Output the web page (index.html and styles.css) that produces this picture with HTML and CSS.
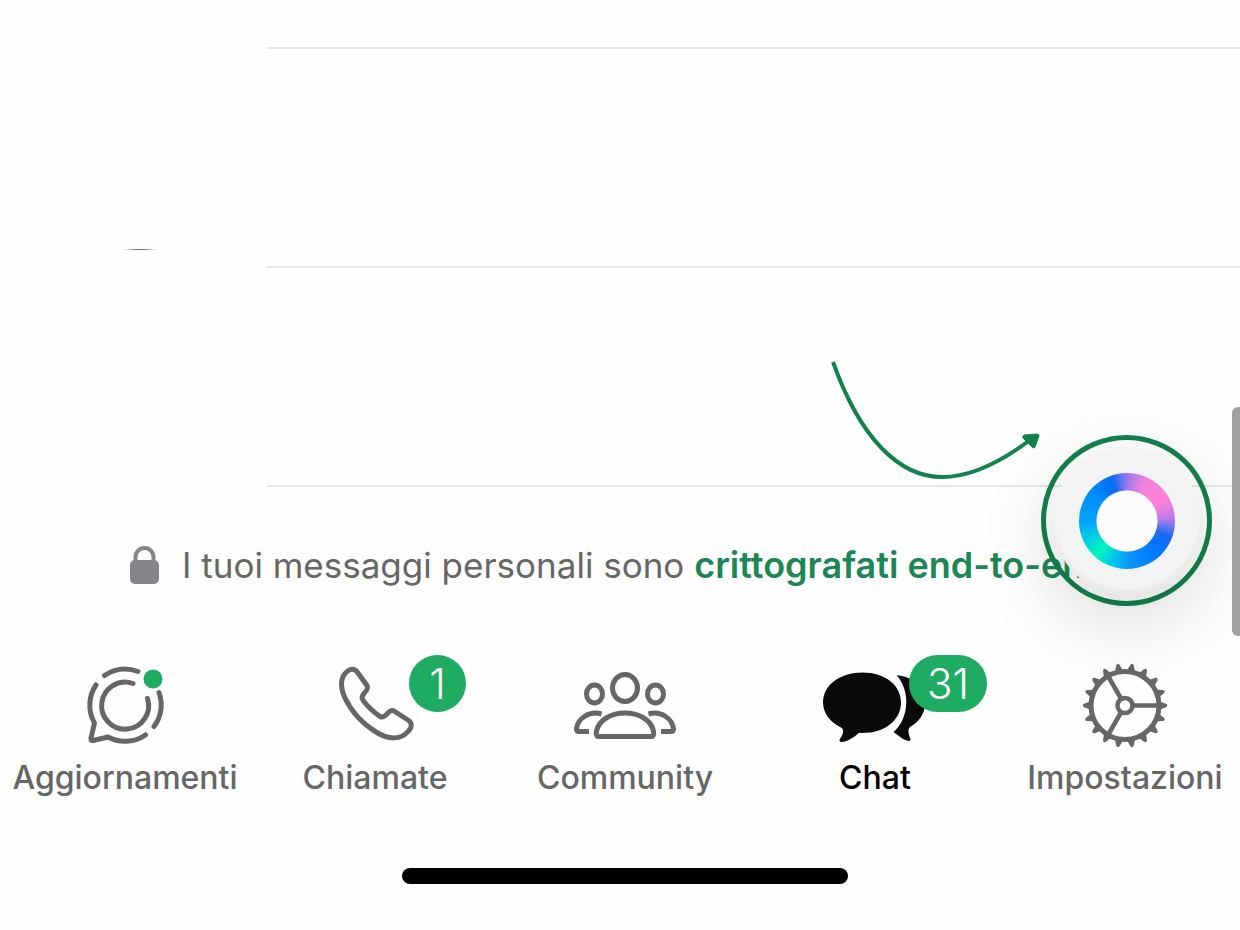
FILE: index.html
```
<!DOCTYPE html>
<html lang="it">
<head>
  <meta charset="UTF-8" />
  <meta name="viewport" content="width=device-width, initial-scale=1.0" />
  <title>Chat</title>
  <link rel="stylesheet" href="styles.css">
</head>
<body>
  <main class="chats">
    <div class="chat-row first"></div>
    <div class="chat-row">
      <svg class="avatar-edge" width="36" height="2" viewBox="0 0 36 2"><path d="M2 1.8 Q18 0 34 1.8z" fill="#333"/></svg>
    </div>
    <div class="chat-row"></div>

    <p class="notice">
      <svg class="lock" width="30" height="38" viewBox="0 0 30 38">
        <path d="M5.500 17v-6a9 9 0 0 1 18 0v6" fill="none" stroke="#858489" stroke-width="4"/>
        <rect y="14" width="29" height="24" rx="5" fill="#858489"/>
      </svg>
      <span>I tuoi messaggi personali sono <a href="#">crittografati end-to-end</a></span>
    </p>

    <svg class="arrow" width="212" height="126" viewBox="0 0 212 126">
      <path d="M5 6C32 82 71 121 114 121C140 121 170 108 202 84" fill="none" stroke="#12824c" stroke-width="4"/>
      <path d="M196 79L209 78Q211 78 211 80L207 91Q206 93 204 91L195 82Q194 80 196 79z" fill="#12824c" stroke="#12824c"/>
    </svg>

    <button class="ai" type="button" aria-label="Meta AI">
      <span class="disc"><span class="halo"></span></span>
    </button>
    <div class="scrollbar"></div>
  </main>

  <footer>
    <nav>
      <a href="#">
        <svg class="icon" width="90" height="92" viewBox="0 0 90 92" fill="none" stroke="#666" stroke-width="5" stroke-linecap="round" stroke-linejoin="round">
          <path d="M24.500 15.500A38 38 0 0 1 58 11.500"/>
          <path d="M79 32.500A36 36 0 0 1 74 66.500"/>
          <path d="M65.500 75A36 36 0 0 1 28 77L13 80.500Q10.500 81 11 78L14.500 63A36 36 0 0 1 16 25"/>
          <path d="M53 23.500A23.500 23.500 0 1 0 67.500 38.500"/>
          <circle cx="73" cy="19" r="9.500" fill="#1fab61" stroke="none"/>
        </svg>
        <span>Aggiornamenti</span>
      </a>
      <a href="#">
        <svg class="icon" width="90" height="92" viewBox="0 0 90 92" fill="none" stroke="#666" stroke-width="5" stroke-linejoin="round">
          <path d="M18.500 10.500C22 8 26 9.500 28 13L37 25.500C40 30 32 33 32 38C33 42 43 52 50 56.500C56 60 58 48 64 51L78 60C82.500 63 82 67 78.500 71C71 80 59 80 46 72C33 64 21 51 14.500 37C10 26 10.500 16 18.500 10.500z"/>
        </svg>
        <b class="badge">1</b>
        <span>Chiamate</span>
      </a>
      <a href="#">
        <svg class="icon" width="104" height="92" viewBox="0 0 104 92" fill="none" stroke="#666" stroke-width="5">
          <ellipse cx="52" cy="28" rx="12.500" ry="13.500"/>
          <ellipse cx="21.500" cy="34" rx="8" ry="9"/>
          <ellipse cx="82.500" cy="34" rx="8" ry="9"/>
          <path d="M26 76.500Q22.500 76.500 23.500 71C29 47 75 47 80.500 71Q81.500 76.500 78 76.500z" stroke-linejoin="round"/>
          <path d="M28.500 54C16 50 4.500 59 3.500 69Q3.500 71.500 6 71.500H16"/>
          <path d="M75.500 54C88 50 99.500 59 100.500 69Q100.500 71.500 98 71.500H88"/>
        </svg>
        <span>Community</span>
      </a>
      <a class="active" href="#">
        <svg class="icon" width="104" height="92" viewBox="0 0 104 92" fill="#0a0a0a">
          <path d="M67 15C88 14 102 26 102 43C102 54 96 62 87 67C84 70 86 75 87.500 79C88 82 84 81 80 79L69 71L65 71C87 60 86 25 67 15z"/>
          <path d="M64 11C86 24 86 62 62 74" fill="none" stroke="#fefefe" stroke-width="6"/>
          <path d="M39.500 12.500C62 12.500 78 25 78 42.500C78 60 62 73 39.500 73L36 72.800C30 78 24 82 18 82Q15.500 81 17 79C21 73 21 69 18 67.500C7 62 0 53 0 42.500C0 25 17 12.500 39.500 12.500z"/>
        </svg>
        <b class="badge wide">31</b>
        <span>Chat</span>
      </a>
      <a href="#">
        <svg class="icon" width="90" height="92" viewBox="0 0 90 92" fill="none" stroke="#666">
          <defs><path id="tooth" d="M80 41.500L86 43.800Q88.500 45.500 86 47.200L80 49.500z" fill="#666" stroke="none"/></defs>
          <circle cx="45" cy="45.500" r="34" stroke-width="5"/>
          <circle cx="45" cy="45.500" r="7.500" stroke-width="4.500"/>
          <path d="M53 45.500H79M41 38.500L28 16M41 52.500L28 75" stroke-width="4.500"/>
          <use href="#tooth"/>
          <use href="#tooth" transform="rotate(20 45 45.500)"/>
          <use href="#tooth" transform="rotate(40 45 45.500)"/>
          <use href="#tooth" transform="rotate(60 45 45.500)"/>
          <use href="#tooth" transform="rotate(80 45 45.500)"/>
          <use href="#tooth" transform="rotate(100 45 45.500)"/>
          <use href="#tooth" transform="rotate(120 45 45.500)"/>
          <use href="#tooth" transform="rotate(140 45 45.500)"/>
          <use href="#tooth" transform="rotate(160 45 45.500)"/>
          <use href="#tooth" transform="rotate(180 45 45.500)"/>
          <use href="#tooth" transform="rotate(200 45 45.500)"/>
          <use href="#tooth" transform="rotate(220 45 45.500)"/>
          <use href="#tooth" transform="rotate(240 45 45.500)"/>
          <use href="#tooth" transform="rotate(260 45 45.500)"/>
          <use href="#tooth" transform="rotate(280 45 45.500)"/>
          <use href="#tooth" transform="rotate(300 45 45.500)"/>
          <use href="#tooth" transform="rotate(320 45 45.500)"/>
          <use href="#tooth" transform="rotate(340 45 45.500)"/>
        </svg>
        <span>Impostazioni</span>
      </a>
    </nav>
    <div class="home-bar"></div>
  </footer>
</body>
</html>
```
FILE: styles.css
```
* {
  box-sizing: border-box;
}
body {
  margin: 0;
  background: #fefefe;
  font-family: Inter, "Liberation Sans", sans-serif;
  overflow: hidden;
}
.chats {
  position: relative;
}
.chat-row {
  height: 219px;
  margin-left: 267px;
  border-bottom: 2px solid #e6e6e6;
}
.chat-row.first {
  height: 49px;
}
.avatar-edge {
  display: block;
  position: absolute;
  left: 122px;
  top: 248px;
}
.notice {
  display: flex;
  align-items: center;
  gap: 22px;
  height: 40px;
  margin: 58px 0 0;
  padding-left: 130px;
  font-size: 35px;
  line-height: 40px;
  color: #666;
  white-space: nowrap;
}
.notice a {
  color: #1b8755;
  font-size: 36px;
  font-weight: 600;
  text-decoration: none;
}
.arrow {
  position: absolute;
  right: 200px;
  top: 356px;
}
.ai {
  position: absolute;
  right: 28px;
  top: 435px;
  width: 171px;
  height: 171px;
  padding: 0;
  display: flex;
  align-items: center;
  justify-content: center;
  background: none;
  border: 5px solid #12824c;
  border-radius: 50%;
}
.disc {
  display: flex;
  align-items: center;
  justify-content: center;
  width: 148px;
  height: 148px;
  border-radius: 50%;
  background: #f3f3f3;
  box-shadow: inset 0 -5px 3px #e9e9e9, 0 24px 80px rgba(0, 0, 0, 0.16);
}
.halo {
  width: 96px;
  height: 96px;
  border-radius: 50%;
  background:
    radial-gradient(circle, #fcfcfc 30px, transparent 31px),
    conic-gradient(#9a78f0 0deg, #f383dc 25deg, #ff80d6 60deg, #c07de8 85deg, #1a6cf0 110deg, #0074ff 130deg, #0a92ff 175deg, #00c8ea 200deg, #00f5bd 222deg, #00d0e4 245deg, #00a2ff 270deg, #008cff 310deg, #0a6cf5 340deg, #9a78f0 360deg);
}
.scrollbar {
  position: absolute;
  right: -4px;
  top: 407px;
  width: 12px;
  height: 229px;
  border-radius: 6px;
  background: #a0a0a0;
}
/* the tab bar runs slightly past the right edge */
footer {
  margin: 75px -10px 0 0;
}
nav {
  display: grid;
  grid-template-columns: repeat(5, 1fr);
}
nav a {
  position: relative;
  display: flex;
  flex-direction: column;
  align-items: center;
  color: #666;
  font-size: 32px;
  font-weight: 500;
  line-height: 40px;
  text-decoration: none;
}
nav a.active {
  color: #000;
}
.icon {
  margin-bottom: 6px;
}
.badge {
  position: absolute;
  left: 50%;
  top: -5px;
  min-width: 57px;
  height: 57px;
  margin-left: 34px;
  border-radius: 29px;
  background: #1fab61;
  color: #fff;
  font-size: 42px;
  font-weight: 300;
  line-height: 57px;
  text-align: center;
}
.badge.wide {
  min-width: 78px;
}
.home-bar {
  width: 446px;
  height: 16px;
  margin: 70px auto 0;
  border-radius: 8px;
  background: #000;
}
```
